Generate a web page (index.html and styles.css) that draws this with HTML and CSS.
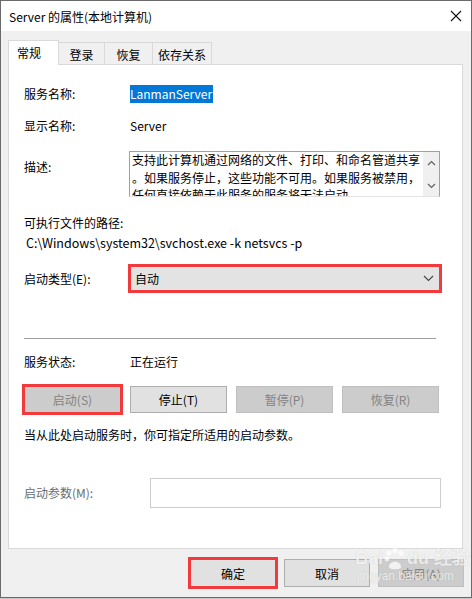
FILE: index.html
```html
<!DOCTYPE html>
<html lang="zh-CN">
<head>
  <meta charset="UTF-8">
  <title>Server 的属性(本地计算机)</title>
  <link rel="stylesheet" href="styles.css">
</head>
<body>

  <div class="window">
    <div class="titlebar">
      <span class="title">Server 的属性(本地计算机)</span>
      <svg class="close" width="12" height="12" viewBox="0 0 12 12">
        <path d="M1 1 L11 11 M11 1 L1 11" stroke="#111" stroke-width="1.1" fill="none"/>
      </svg>
    </div>

    <div class="content">
      <div class="tabs">
        <div class="tab active">常规</div>
        <div class="tab w46">登录</div>
        <div class="tab w48">恢复</div>
        <div class="tab w59">依存关系</div>
      </div>

      <div class="panel">
        <div class="row r-name">
          <div class="label">服务名称:</div>
          <div class="value"><span class="selected">LanmanServer</span></div>
        </div>
        <div class="row r-display">
          <div class="label">显示名称:</div>
          <div class="value">Server</div>
        </div>
        <div class="row r-desc">
          <div class="label desc-label">描述:</div>
          <div class="textbox">
            <div class="textbox-text">支持此计算机通过网络的文件、打印、和命名管道共享<br>。如果服务停止，这些功能不可用。如果服务被禁用，<br>任何直接依赖于此服务的服务将无法启动。</div>
            <div class="scrollbar">
              <svg width="9" height="6" viewBox="0 0 9 6"><path d="M1 5 L4.5 1.5 L8 5" stroke="#606060" stroke-width="1.2" fill="none"/></svg>
              <svg width="9" height="6" viewBox="0 0 9 6"><path d="M1 1 L4.5 4.5 L8 1" stroke="#606060" stroke-width="1.2" fill="none"/></svg>
            </div>
          </div>
        </div>
        <div class="line r-pathlabel">可执行文件的路径:</div>
        <div class="line path">C:\Windows\system32\svchost.exe -k netsvcs -p</div>
        <div class="row r-type">
          <div class="label">启动类型(E):</div>
          <div class="select marked">
            <span>自动</span>
            <svg width="11" height="7" viewBox="0 0 11 7"><path d="M1 1 L5.5 5.5 L10 1" stroke="#444" stroke-width="1.1" fill="none"/></svg>
          </div>
        </div>

        <div class="separator"></div>

        <div class="row r-status">
          <div class="label">服务状态:</div>
          <div class="value">正在运行</div>
        </div>
        <div class="buttons">
          <div class="btn disabled marked">启动(S)</div>
          <div class="btn">停止(T)</div>
          <div class="btn disabled">暂停(P)</div>
          <div class="btn disabled">恢复(R)</div>
        </div>
        <div class="line hint">当从此处启动服务时，你可指定所适用的启动参数。</div>
        <div class="row r-param">
          <div class="label param-label">启动参数(M):</div>
          <div class="param-input"></div>
        </div>
      </div>

      <div class="footer">
        <div class="btn wide marked">确定</div>
        <div class="btn wide">取消</div>
        <div class="btn wide disabled">应用(A)</div>
      </div>
    </div>

    <div class="watermark">
      <div class="wm-top">Bai<svg width="22" height="24" viewBox="0 0 22 24"><circle cx="5" cy="6" r="2.6"/><circle cx="11" cy="3.5" r="2.6"/><circle cx="17" cy="6" r="2.6"/><circle cx="3" cy="12" r="2.3"/><path d="M5 20 C5 13 17 13 17 20 C17 23 5 23 5 20 Z"/></svg>du 经验</div>
      <div class="wm-url">jingyan.baidu.com</div>
    </div>
  </div>

</body>
</html>
```

FILE: styles.css
```css
body {
  margin: 0;
  background-color: #c8c8c8;
  font-family: "Noto Sans CJK SC", "Noto Sans", sans-serif;
  font-size: 12px;
  color: #000;
}
.window {
  position: relative;
  width: 472px;
  height: 598px;
  box-sizing: border-box;
  border: 1px solid #6a6a6a;
  background-color: #f0f0f0;
  display: flex;
  flex-direction: column;
}
.titlebar {
  height: 30px;
  background-color: #fff;
  display: flex;
  align-items: center;
  justify-content: space-between;
  padding: 0 9px 0 8px;
}
.title {
  font-size: 12px;
}
.content {
  padding: 9px 0 0 7px;
}
.tabs {
  display: flex;
  align-items: flex-end;
  height: 25px;
  margin-bottom: -1px;
  position: relative;
  z-index: 1;
}
.tab {
  box-sizing: border-box;
  height: 22px;
  margin-bottom: 1px;
  border: 1px solid #d9d9d9;
  border-bottom: none;
  border-left: none;
  background-color: #f0f0f0;
  display: flex;
  align-items: center;
  justify-content: center;
  padding-top: 1px;
}
.tab.active {
  width: 51px;
  height: 25px;
  margin-bottom: 0;
  border-left: 1px solid #d9d9d9;
  background-color: #fff;
  justify-content: flex-start;
  padding: 0 0 1px 8px;
}
.w46 { width: 46px; }
.w48 { width: 48px; }
.w59 { width: 59px; }
.panel {
  width: 455px;
  height: 485px;
  box-sizing: border-box;
  border: 1px solid #d9d9d9;
  background-color: #fff;
  padding: 0 0 0 15px;
}
.row {
  display: flex;
  align-items: center;
}
.label {
  width: 106px;
  flex: none;
  line-height: 16px;
}
.value {
  line-height: 16px;
}
.selected {
  background-color: #0078d7;
  color: #fff;
  padding: 0 1px 1px 0;
}
.r-name { margin-top: 21px; height: 16px; }
.r-display { margin-top: 16px; height: 16px; }
.r-desc {
  margin-top: 17px;
  align-items: flex-start;
}
.desc-label {
  margin-top: 8px;
  width: 105px;
}
.textbox {
  width: 311px;
  height: 46px;
  box-sizing: border-box;
  border: 1px solid #a0a0a0;
  border-bottom-color: #e3e3e3;
  display: flex;
  overflow: hidden;
}
.textbox-text {
  flex: 1;
  white-space: nowrap;
  overflow: hidden;
  line-height: 17.5px;
  padding: 0 0 0 2px;
  margin-top: -1px;
}
.scrollbar {
  width: 16px;
  background-color: #f0f0f0;
  display: flex;
  flex-direction: column;
  justify-content: space-between;
  align-items: center;
  padding: 8px 0 7px;
}
.line {
  line-height: 16px;
}
.r-pathlabel { margin-top: 18px; }
.path {
  margin-top: 4px;
  padding-left: 2px;
  font-size: 12.5px;
}
.r-type { margin-top: 15px; }
.select {
  width: 310px;
  height: 25px;
  box-sizing: border-box;
  background-color: #e3e3e3;
  border: 1px solid #b9b9b9;
  display: flex;
  align-items: center;
  justify-content: space-between;
  padding: 0 5px 0 4px;
}
.marked {
  outline: 3px solid #f23a3c;
  outline-offset: -1px;
}
.separator {
  width: 412px;
  height: 1px;
  background-color: #a0a0a0;
  margin-top: 47px;
}
.r-status { margin-top: 15px; height: 16px; }
.buttons {
  display: grid;
  grid-template-columns: repeat(4, 97px);
  gap: 9px;
  margin-top: 16px;
}
.btn {
  height: 27px;
  box-sizing: border-box;
  background-color: #e1e1e1;
  border: 1px solid #adadad;
  display: flex;
  align-items: center;
  justify-content: center;
}
.btn.disabled {
  background-color: #cccccc;
  border-color: #bfbfbf;
  color: #838383;
}
.hint { margin-top: 14px; }
.r-param { margin-top: 35px; }
.param-label {
  width: 126px;
  color: #6d6d6d;
}
.param-input {
  width: 291px;
  height: 30px;
  box-sizing: border-box;
  border: 1px solid #cccccc;
  background-color: #fff;
}
.footer {
  display: flex;
  gap: 8px;
  padding: 10px 0 0 182px;
}
.btn.wide {
  width: 86px;
  height: 28px;
}
.watermark {
  position: absolute;
  left: 354px;
  top: 546px;
  color: rgba(255, 255, 255, 0.75);
  text-shadow: 0 0 1px rgba(120, 120, 120, 0.35);
  pointer-events: none;
}
.wm-top {
  display: flex;
  align-items: flex-end;
  font-family: "Liberation Sans", sans-serif;
  font-size: 18px;
  font-weight: bold;
  line-height: 22px;
}
.wm-top svg {
  fill: rgba(255, 255, 255, 0.75);
  margin: 0 1px -2px;
}
.wm-url {
  font-family: "Liberation Sans", sans-serif;
  font-size: 12px;
  line-height: 14px;
  margin-left: 2px;
}
```
